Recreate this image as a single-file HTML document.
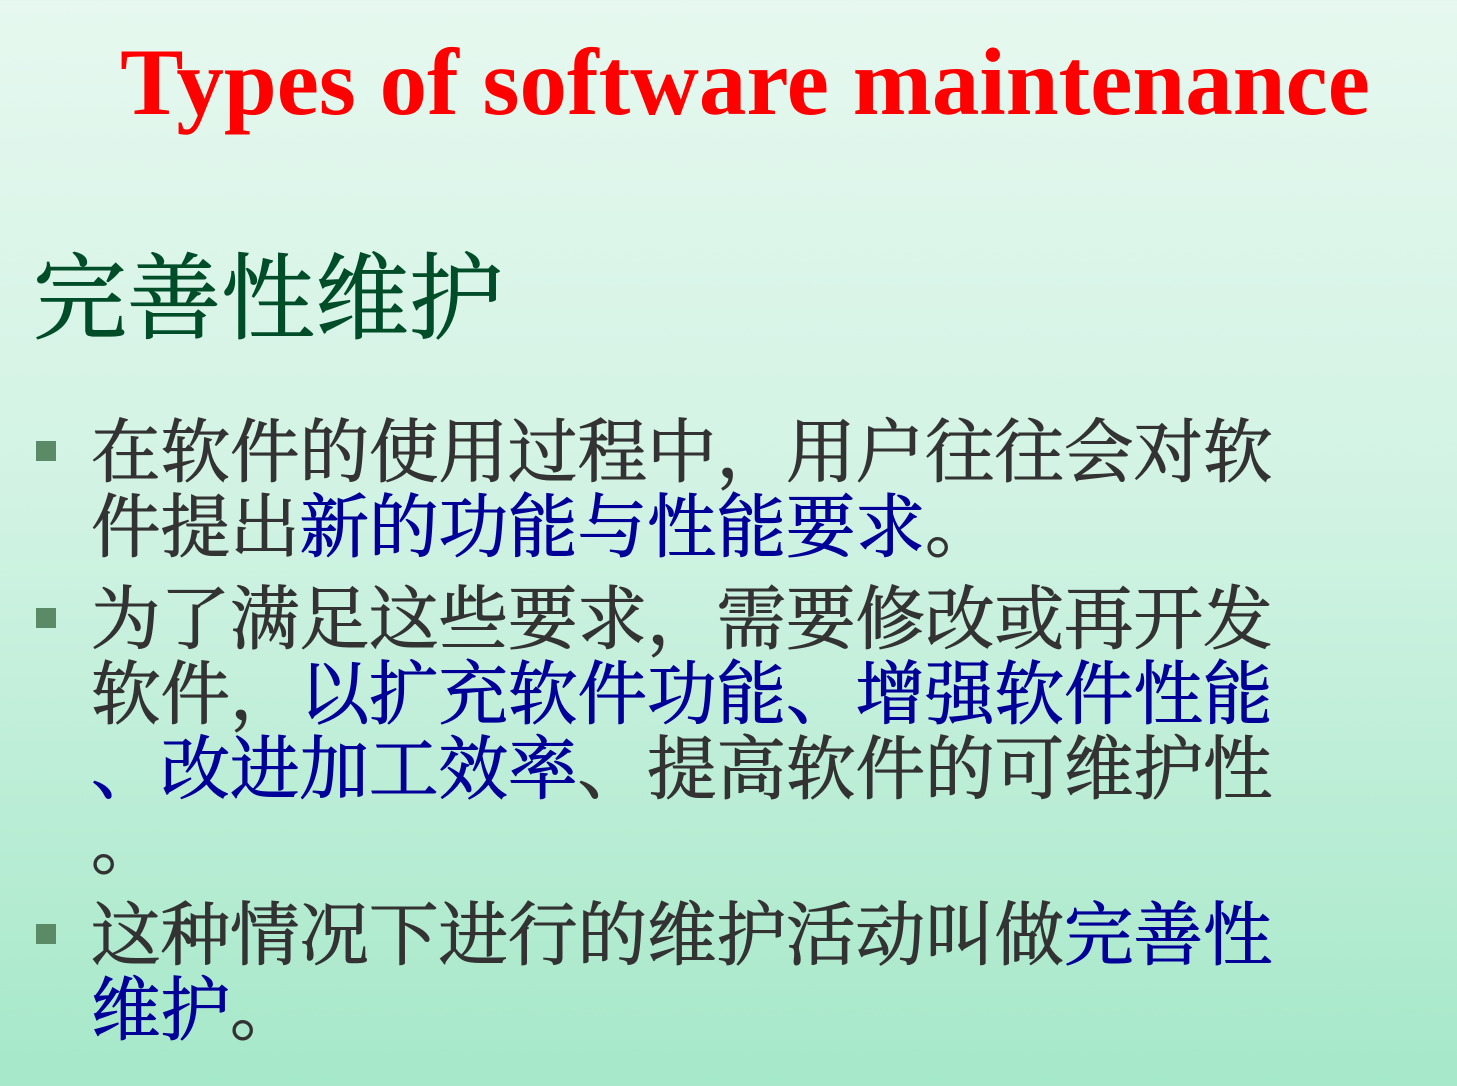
<!DOCTYPE html>
<html><head><meta charset="utf-8"><style>
html,body{margin:0;padding:0}
body{width:1457px;height:1086px;overflow:hidden;position:relative;background:linear-gradient(to bottom,#e6f8ef 0%,#d2f3e4 45%,#a6e8c9 100%);}
.t{position:absolute;left:0;width:1490px;text-align:center;top:22px;font:bold 95px/120px "Liberation Serif",serif;color:#ff0000;white-space:nowrap}
.h{position:absolute;left:33px;top:245px;font:94px/110px "Liberation Serif","Noto Serif CJK SC",serif;color:#004d2a;white-space:nowrap;-webkit-text-stroke:1px #004d2a}
.l{position:absolute;left:91px;font:69.5px/80px "Liberation Serif","Noto Serif CJK SC",serif;color:#333;white-space:nowrap;-webkit-text-stroke:1px #333}
.b{color:#000099;-webkit-text-stroke:1px #000099}
.sq{position:absolute;left:36px;width:20px;height:20px;background:#5a8a66}
</style></head><body>
<div class="t">Types of software maintenance</div>
<div class="h">完善性维护</div>
<div class="sq" style="top:441px"></div>
<div class="l" style="top:414px">在软件的使用过程中，用户往往会对软</div>
<div class="l" style="top:489px">件提出<span class="b">新的功能与性能要求</span>。</div>
<div class="sq" style="top:608px"></div>
<div class="l" style="top:581px">为了满足这些要求，需要修改或再开发</div>
<div class="l" style="top:656px">软件，<span class="b">以扩充软件功能、增强软件性能</span></div>
<div class="l" style="top:731px"><span class="b">、改进加工效率</span>、提高软件的可维护性</div>
<div class="l" style="top:806px">。</div>
<div class="sq" style="top:924px"></div>
<div class="l" style="top:897px">这种情况下进行的维护活动叫做<span class="b">完善性</span></div>
<div class="l" style="top:972px"><span class="b">维护</span>。</div>
</body></html>
